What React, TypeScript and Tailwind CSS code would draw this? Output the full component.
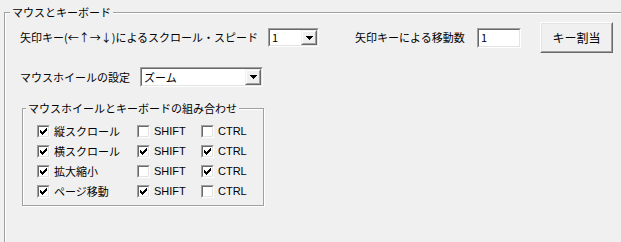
import * as React from "react";

// Classic Win32-style dialog: "マウスとキーボード" settings page

const Sunken: React.FC<{ className?: string; children?: React.ReactNode }> = ({ className, children }) => (
  <div className={`border border-t-[#a0a0a0] border-l-[#a0a0a0] border-b-white border-r-white ${className ?? ""}`}>
    <div className="h-full w-full border border-t-[#696969] border-l-[#696969] border-b-[#e3e3e3] border-r-[#e3e3e3] bg-white">
      {children}
    </div>
  </div>
);

const Raised: React.FC<{ className?: string; children?: React.ReactNode }> = ({ className, children }) => (
  <div className={`border border-t-white border-l-white border-b-[#696969] border-r-[#696969] ${className ?? ""}`}>
    <div className="flex h-full w-full items-center justify-center border border-t-[#e3e3e3] border-l-[#e3e3e3] border-b-[#a0a0a0] border-r-[#a0a0a0] bg-[#f0f0f0]">
      {children}
    </div>
  </div>
);

const Combo: React.FC<{ value: string; className?: string }> = ({ value, className }) => (
  <Sunken className={className}>
    <div className="flex h-full items-center">
      <span className="flex-1 pl-[2px] leading-none">{value}</span>
      <div className="h-full w-[16px]">
        <div className="flex h-full w-full items-center justify-center border border-t-[#f0f0f0] border-l-[#f0f0f0] border-b-[#696969] border-r-[#696969]">
          <div className="flex h-full w-full items-center justify-center border border-t-white border-l-white border-b-[#a0a0a0] border-r-[#a0a0a0] bg-[#f0f0f0]">
            <svg width="7" height="4" viewBox="0 0 7 4" shapeRendering="crispEdges">
              <polygon points="0,0 7,0 3.5,4" fill="#000" />
            </svg>
          </div>
        </div>
      </div>
    </div>
  </Sunken>
);

const Check: React.FC<{ checked: boolean; label: string; latin?: boolean; className?: string }> = ({
  checked,
  label,
  latin,
  className,
}) => (
  <div className={`flex items-center ${className ?? ""}`}>
    <Sunken className="h-[13px] w-[13px] shrink-0">
      <div className="flex h-full w-full items-center justify-center">
        {checked && (
          <svg width="7" height="7" viewBox="0 0 7 7" shapeRendering="crispEdges">
            <polygon points="0,2 2,4 7,-1 7,2 2,7 0,5" fill="#000" />
          </svg>
        )}
      </div>
    </Sunken>
    <span className={`ml-[4px] whitespace-nowrap ${latin ? "font-['Liberation_Sans',sans-serif]" : ""}`}>{label}</span>
  </div>
);

const rows = [
  { name: "縦スクロール", main: true, shift: false, ctrl: false },
  { name: "横スクロール", main: true, shift: true, ctrl: true },
  { name: "拡大縮小", main: true, shift: false, ctrl: true },
  { name: "ページ移動", main: true, shift: true, ctrl: false },
];

export default function App() {
  return (
    <div className="h-[242px] w-[621px] overflow-hidden bg-[#f0f0f0] pl-[4px] pt-[12px] font-['Noto_Sans_CJK_JP',sans-serif] text-[11px] text-black">
      <div className="relative h-[260px] w-[660px] border border-[#a0a0a0] pl-[15px] pt-[9px] shadow-[inset_1px_1px_0_#fff,1px_1px_0_#fff]">
        <span className="absolute left-[5px] top-[-8px] bg-[#f0f0f0] px-[2px] leading-[15px]">マウスとキーボード</span>

        {/* Row 1 */}
        <div className="flex h-[31px] items-center">
          <span className="w-[248px] whitespace-nowrap">矢印キー(←↑→↓)によるスクロール・スピード</span>
          <Combo value="1" className="h-[19px] w-[51px]" />
          <span className="ml-[36px] w-[122px] whitespace-nowrap">矢印キーによる移動数</span>
          <Sunken className="h-[20px] w-[44px]">
            <div className="flex h-full items-center pl-[2px] leading-none">1</div>
          </Sunken>
          <Raised className="ml-[19px] h-[31px] w-[73px]">
            <span className="text-[12px]">キー割当</span>
          </Raised>
        </div>

        {/* Row 2 */}
        <div className="mt-[14px] flex h-[20px] items-center">
          <span className="w-[120px] whitespace-nowrap">マウスホイールの設定</span>
          <Combo value="ズーム" className="h-[20px] w-[123px]" />
        </div>

        {/* Wheel + keyboard combinations */}
        <div className="relative ml-[2px] mt-[21px] h-[98px] w-[242px] border border-[#a0a0a0] pl-[14px] pt-[12px] shadow-[inset_1px_1px_0_#fff,1px_1px_0_#fff]">
          <span className="absolute left-[3px] top-[-8px] bg-[#f0f0f0] px-[2px] leading-[15px] whitespace-nowrap">
            マウスホイールとキーボードの組み合わせ
          </span>
          {rows.map((r) => (
            <div key={r.name} className="flex h-[20px] items-center">
              <Check checked={r.main} label={r.name} className="w-[100px]" />
              <Check checked={r.shift} label="SHIFT" latin className="w-[64px]" />
              <Check checked={r.ctrl} label="CTRL" latin />
            </div>
          ))}
        </div>
      </div>
    </div>
  );
}
